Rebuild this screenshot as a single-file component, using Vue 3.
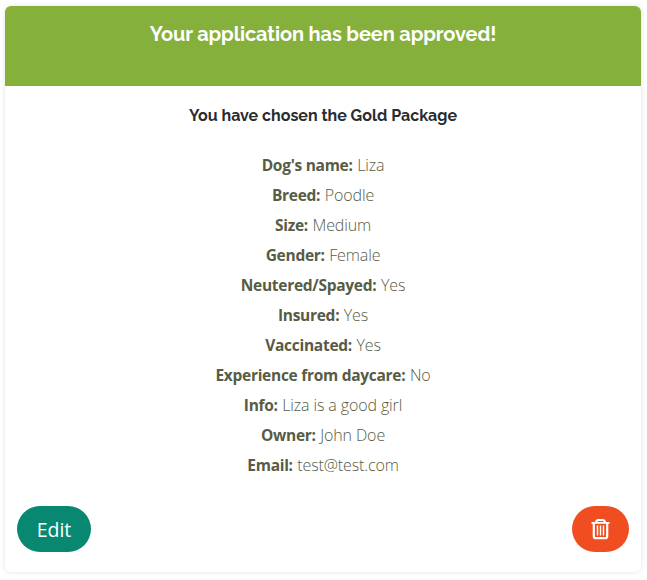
<script setup>
const details = [
  { label: "Dog's name:", value: 'Liza' },
  { label: 'Breed:', value: 'Poodle' },
  { label: 'Size:', value: 'Medium' },
  { label: 'Gender:', value: 'Female' },
  { label: 'Neutered/Spayed:', value: 'Yes' },
  { label: 'Insured:', value: 'Yes' },
  { label: 'Vaccinated:', value: 'Yes' },
  { label: 'Experience from daycare:', value: 'No' },
  { label: 'Info:', value: 'Liza is a good girl' },
  { label: 'Owner:', value: 'John Doe' },
  { label: 'Email:', value: 'test@test.com' },
]
</script>

<template>
  <main class="page">
    <article class="card">
      <header class="card-header">
        <h1>Your application has been approved!</h1>
      </header>
      <div class="card-body">
        <h2>You have chosen the Gold Package</h2>
        <ul class="details">
          <li v-for="item in details" :key="item.label">
            <strong>{{ item.label }}</strong><span>{{ item.value }}</span>
          </li>
        </ul>
      </div>
      <footer class="actions">
        <button class="btn edit" type="button">Edit</button>
        <button class="btn delete" type="button" aria-label="Delete">
          <svg width="20" height="24" viewBox="0 0 20 24" fill="none" stroke="currentColor">
            <path d="M0.5 5.9H18.5" stroke-width="1.8" />
            <path d="M5 5.4Q5.4 3 7.4 3H11.6Q13.6 3 14 5.4" stroke-width="2" />
            <path d="M2.8 6V19.2Q2.8 21.2 4.8 21.2H14.2Q16.2 21.2 16.2 19.2V6" stroke-width="2.2" />
            <path d="M6.5 8.5V18.6M9.5 8.5V18.6M12.5 8.5V18.6" stroke-width="1.4" />
          </svg>
        </button>
      </footer>
    </article>
  </main>
</template>

<style>
body {
  margin: 0;
  background: #fff;
}
</style>

<style scoped>
.page {
  box-sizing: border-box;
  height: 580px;
  padding: 6px 6px 8px 5px;
}
.card {
  box-sizing: border-box;
  height: 566px;
  display: flex;
  flex-direction: column;
  border-radius: 6px;
  overflow: hidden;
  background: #fff;
  box-shadow: 0 0 5px rgba(0, 0, 0, 0.12);
  font-family: 'Open Sans', 'Noto Sans', sans-serif;
  text-align: center;
}
.card-header {
  height: 80px;
  background: #86b03c;
  color: #fff;
}
h1,
h2 {
  margin: 0;
  font-family: Raleway, Lato, sans-serif;
  white-space: nowrap;
}
h1 {
  padding-top: 16px;
  font-size: 20px;
  line-height: 24px;
  font-weight: 700;
  letter-spacing: -0.11px;
}
h2 {
  padding-top: 20px;
  font-size: 16px;
  line-height: 20px;
  font-weight: 700;
  color: #292d31;
}
.details {
  list-style: none;
  margin: 24px 0 0;
  padding: 0;
  color: #575c45;
  font-size: 16px;
  line-height: 30px;
}
.details li {
  height: 30px;
}
.details strong {
  margin-right: 4.5px;
  font-size: 15.5px;
  font-weight: 700;
  letter-spacing: -0.28px;
}
.details span {
  font-weight: 330;
  letter-spacing: -0.12px;
}
.actions {
  margin-top: auto;
  padding: 0 12px 20px;
  display: flex;
  justify-content: space-between;
}
.btn {
  box-sizing: border-box;
  height: 46px;
  padding: 0;
  border: 0;
  border-radius: 23px;
  display: flex;
  align-items: center;
  justify-content: center;
  color: #fff;
  font: 400 19.5px 'Open Sans', 'Noto Sans', sans-serif;
}
.edit {
  width: 74px;
  background: #088870;
}
.delete {
  width: 57px;
  background: #f04e20;
}
</style>
